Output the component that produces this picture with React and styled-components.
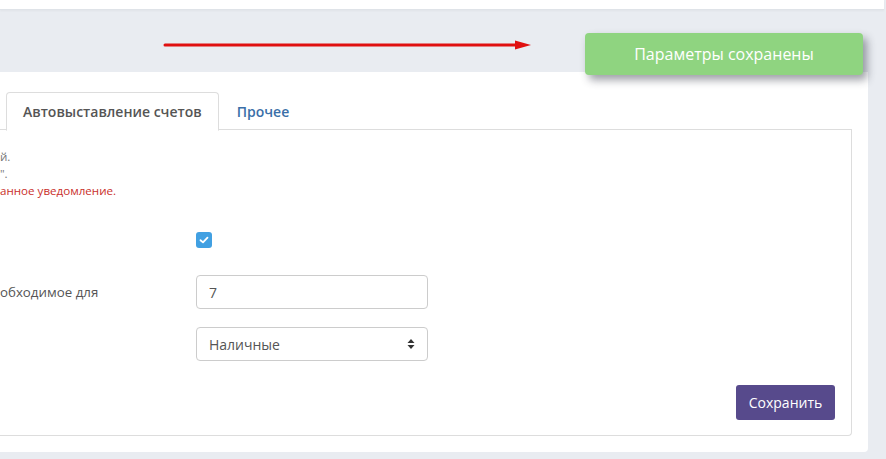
import React from "react";
import styled, { createGlobalStyle } from "styled-components";

const Global = createGlobalStyle`
  html, body { margin: 0; padding: 0; background: #e9ecf1; }
  body { font-family: "Open Sans", "Noto Sans", sans-serif; color: #555; }
  * { box-sizing: border-box; }
`;

const Page = styled.div`
  position: relative;
  width: 886px;
  height: 459px;
  overflow: hidden;
  background: #e9ecf1;
`;

const TopBar = styled.div`
  width: 884px;
  height: 10px;
  background: #fff;
  border-bottom: 1px solid #dfe3e8;
  box-shadow: 0 1px 2px rgba(0, 0, 0, 0.04);
`;

const Panel = styled.div`
  margin-top: 62px;
  width: 868px;
  height: 380px;
  background: #fff;
  border-bottom-right-radius: 4px;
  padding-top: 20px;
`;

const Tabs = styled.ul`
  display: flex;
  margin: 0;
  padding: 0 0 0 6px;
  list-style: none;
  width: 852px;
  height: 38px;
  border-bottom: 1px solid #ddd;
`;

const Tab = styled.li`
  margin-right: 1px;
  margin-bottom: -1px;
  padding: 0 16px;
  height: 39px;
  display: flex;
  align-items: center;
  font-size: 14px;
  font-weight: 600;
  color: ${(p) => (p.$active ? "#555" : "#3a6fa8")};
  background: ${(p) => (p.$active ? "#fff" : "transparent")};
  border: 1px solid ${(p) => (p.$active ? "#ddd" : "transparent")};
  border-bottom-color: ${(p) => (p.$active ? "#fff" : "transparent")};
  border-radius: 4px 4px 0 0;
`;

const TabBody = styled.div`
  width: 852px;
  height: 306px;
  border: 1px solid #ddd;
  border-top: none;
  border-left: none;
  border-radius: 0 0 4px 0;
  padding: 18px 16px 0 0;
  display: flex;
  flex-direction: column;
`;

const Notes = styled.div`
  display: flex;
  flex-direction: column;
  font-size: 11.6px;
  line-height: 17px;
`;

const Note = styled.span`
  color: ${(p) => (p.$warn ? "#c9302c" : "#777")};
`;

const Form = styled.div`
  margin-top: 33px;
  display: grid;
  grid-template-columns: 196px 232px;
  grid-auto-rows: auto;
  row-gap: 18px;
  align-items: center;
`;

const Label = styled.label`
  font-size: 13.3px;
  color: #555;
`;

const CheckBox = styled.span`
  width: 16px;
  height: 16px;
  border-radius: 3px;
  background: #41a0e2;
  display: flex;
  align-items: center;
  justify-content: center;
`;

const CheckRow = styled.div`
  height: 16px;
  margin-bottom: 9px;
  display: flex;
  align-items: center;
`;

const Field = styled.div`
  height: 34px;
  border: 1px solid #ccc;
  border-radius: 4px;
  padding: 0 12px;
  display: flex;
  align-items: center;
  justify-content: space-between;
  font-size: 14px;
  color: #555;
  background: #fff;
`;

const Footer = styled.div`
  margin-top: 24px;
  display: flex;
  justify-content: flex-end;
`;

const SaveButton = styled.button`
  width: 99px;
  height: 35px;
  border: none;
  border-radius: 3px;
  background: #574a8c;
  color: #fff;
  font-family: inherit;
  font-size: 14px;
`;

const Toast = styled.div`
  position: absolute;
  left: 585px;
  top: 33px;
  width: 278px;
  height: 42px;
  border-radius: 4px;
  background: #8fd480;
  color: #fff;
  font-size: 16px;
  display: flex;
  align-items: center;
  justify-content: center;
  box-shadow: 4px 5px 8px rgba(40, 45, 60, 0.45);
`;

const Arrow = styled.svg`
  position: absolute;
  left: 163px;
  top: 39px;
`;

export default function App() {
  return (
    <>
      <Global />
      <Page>
        <TopBar />
        <Panel>
          <Tabs>
            <Tab $active>Автовыставление счетов</Tab>
            <Tab>Прочее</Tab>
          </Tabs>
          <TabBody>
            <Notes>
              <Note>й.</Note>
              <Note>".</Note>
              <Note $warn>анное уведомление.</Note>
            </Notes>
            <Form>
              <span />
              <CheckRow>
                <CheckBox>
                  <svg width="10" height="8" viewBox="0 0 10 8">
                    <path d="M1.5 4.2 L4 6.4 L8.5 1.6" fill="none" stroke="#fff" strokeWidth="1.8" strokeLinecap="round" strokeLinejoin="round" />
                  </svg>
                </CheckBox>
              </CheckRow>
              <Label>обходимое для</Label>
              <Field>7</Field>
              <span />
              <Field>
                Наличные
                <svg width="8" height="12" viewBox="0 0 8 12">
                  <path d="M0.5 5 L4 1 L7.5 5 Z M0.5 7 L4 11 L7.5 7 Z" fill="#333" />
                </svg>
              </Field>
            </Form>
            <Footer>
              <SaveButton>Сохранить</SaveButton>
            </Footer>
          </TabBody>
        </Panel>
        <Arrow width="370" height="12" viewBox="0 0 370 12">
          <line x1="2" y1="6" x2="354" y2="6" stroke="#e01010" strokeWidth="3" strokeLinecap="round" />
          <path d="M352 1.5 L368 6 L352 10.5 Z" fill="#e01010" />
        </Arrow>
        <Toast>Параметры сохранены</Toast>
      </Page>
    </>
  );
}
